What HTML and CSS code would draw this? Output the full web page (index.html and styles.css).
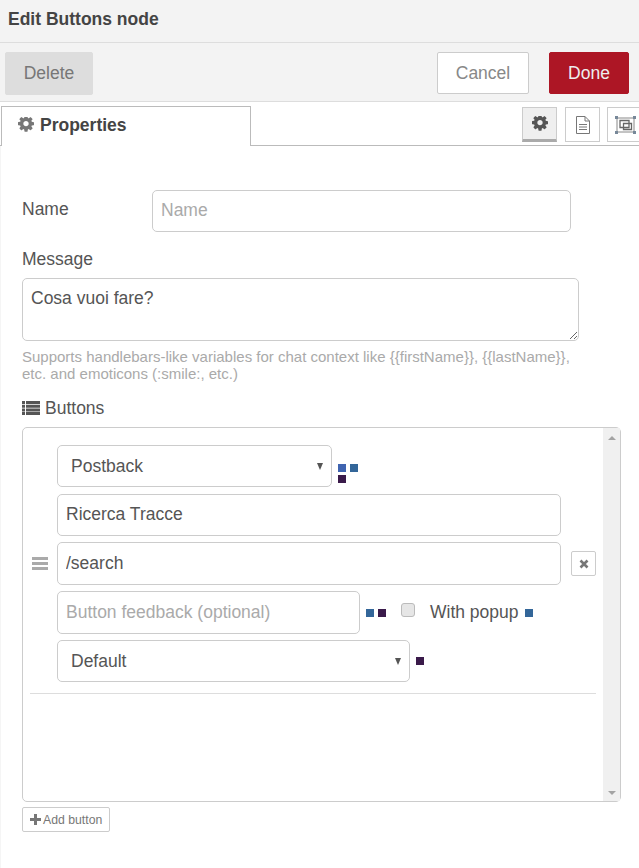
FILE: index.html
```html
<!DOCTYPE html>
<html lang="en">
<head>
    <meta charset="UTF-8">
    <meta name="viewport" content="width=device-width, initial-scale=1.0">
    <title>Edit Buttons node</title>
    <link rel="stylesheet" href="styles.css">
</head>
<body>
    <svg class="defs" width="0" height="0">
        <symbol id="cog" viewBox="0 0 1536 1536">
            <path fill="currentColor" d="M1024 640q0-106-75-181t-181-75-181 75-75 181 75 181 181 75 181-75 75-181zm512-109v222q0 12-8 23t-20 13l-185 28q-19 54-39 91 35 50 107 138 10 12 10 25t-9 23q-27 37-99 108t-94 71q-12 0-26-9l-138-108q-44 23-91 38-16 136-29 186-7 28-36 28h-222q-14 0-24.5-8.5t-11.5-21.5l-28-184q-49-16-90-37l-141 107q-10 9-25 9-14 0-25-11-126-114-165-168-7-10-7-23 0-12 8-23 15-21 51-66.5t54-70.5q-27-50-41-99l-183-27q-13-2-21-12.5t-8-23.5v-222q0-12 8-23t19-13l186-28q14-46 39-92-40-57-107-138-10-12-10-24 0-10 9-23 26-36 98.5-107.5t94.5-71.5q13 0 26 10l138 107q44-23 91-38 16-136 29-186 7-28 36-28h222q14 0 24.5 8.5t11.5 21.5l28 184q49 16 90 37l142-107q9-9 24-9 13 0 25 10 129 119 165 170 7 8 7 22 0 12-8 23-15 21-51 66.5t-54 70.5q26 50 41 98l183 28q13 2 21 12.5t8 23.5z"/>
        </symbol>
    </svg>

    <div id="title">Edit Buttons node</div>

    <div id="toolbar">
        <button class="btn btn-delete">Delete</button>
        <div class="spacer"></div>
        <button class="btn btn-cancel">Cancel</button>
        <button class="btn btn-done">Done</button>
    </div>

    <div id="tabs">
        <div class="tab">
            <svg class="tab-icon"><use href="#cog"/></svg>
            <span>Properties</span>
        </div>
        <div class="spacer"></div>
        <div class="tab-btn tab-btn-active">
            <svg class="tool-cog"><use href="#cog"/></svg>
        </div>
        <div class="tab-btn">
            <svg width="16" height="18" viewBox="0 0 16 18" fill="none" stroke="#777">
                <path d="M1.5 .5h8.5l4.5 4.5v12.5h-13z"/>
                <path d="M10 .5v4.5h4.5M4 8.5h8M4 11h8M4 13.5h8"/>
            </svg>
        </div>
        <div class="tab-btn tab-btn-last">
            <svg width="21" height="18" viewBox="0 0 21 18" fill="none" stroke="#666">
                <path d="M2 2h17v14h-17z" stroke="#888"/>
                <path d="M5 4.500h9v7h-9zM8.500 7.500h8v6h-8z" stroke-width="1.300"/>
                <path fill="#789" stroke="none" d="M0 0h3v3h-3zM18 0h3v3h-3zM0 15h3v3h-3zM18 15h3v3h-3z"/>
            </svg>
        </div>
    </div>

    <div id="form">
        <div class="form-row">
            <label class="name-label">Name</label>
            <input type="text" class="field name-input" placeholder="Name">
        </div>

        <label class="msg-label">Message</label>
        <textarea class="field message">Cosa vuoi fare?</textarea>
        <p class="tip">Supports handlebars-like variables for chat context like {{firstName}}, {{lastName}}, etc. and emoticons (:smile:, etc.)</p>

        <label class="buttons-label">
            <svg width="18" height="14" viewBox="0 0 18 14" fill="#555">
                <path d="M0 0h3v3h-3zM4 0h14v3h-14zM0 3.700h3v3h-3zM4 3.700h14v3h-14zM0 7.400h3v3h-3zM4 7.400h14v3h-14zM0 11h3v3h-3zM4 11h14v3h-14z"/>
            </svg>
            Buttons
        </label>

        <div id="list">
            <div id="list-scroll">
                <div class="item">
                    <div class="handle"><span></span><span></span><span></span></div>
                    <div class="fields">
                        <div class="line">
                            <div class="select-box sel-type">
                                <select class="field"><option>Postback</option></select>
                            </div>
                            <div class="dots dots-wrap">
                                <i class="dot dot-blue"></i><i class="dot dot-steel"></i><i class="dot dot-dark"></i>
                            </div>
                        </div>
                        <input type="text" class="field wide" value="Ricerca Tracce">
                        <input type="text" class="field wide tall" value="/search">
                        <div class="line">
                            <input type="text" class="field feedback tall" placeholder="Button feedback (optional)">
                            <div class="dots">
                                <i class="dot dot-steel"></i><i class="dot dot-dark"></i>
                            </div>
                            <input type="checkbox" class="check">
                            <span class="popup">With popup</span>
                            <i class="dot dot-steel"></i>
                        </div>
                        <div class="line">
                            <div class="select-box sel-style">
                                <select class="field"><option>Default</option></select>
                            </div>
                            <i class="dot dot-dark"></i>
                        </div>
                    </div>
                    <button class="remove">
                        <svg width="10" height="10" viewBox="0 0 10 10" stroke="#777" stroke-width="2.600"><path d="M1.500 1.500l7 7M8.500 1.500l-7 7"/></svg>
                    </button>
                </div>
            </div>
            <div id="scrollbar">
                <span class="arrow-up"></span>
                <span class="arrow-down"></span>
            </div>
        </div>

        <button class="add">
            <svg width="11" height="11" viewBox="0 0 11 11" fill="#777"><path d="M4 0h3v4h4v3h-4v4h-3v-4h-4v-3h4z"/></svg>
            Add button
        </button>
    </div>
</body>
</html>
```

FILE: styles.css
```css
* {
    box-sizing: border-box;
}
body {
    margin: 0;
    padding: 0;
    height: 868px;
    overflow: hidden;
    background-color: #fff;
    color: #555;
    font-family: "Liberation Sans", Arial, sans-serif;
    font-size: 17.5px;
}
.defs {
    display: block;
}
.spacer {
    flex-grow: 1;
}

#title {
    height: 43px;
    padding: 9px 8px 0;
    background-color: #f3f3f3;
    border-bottom: 1px solid #ddd;
    color: #444;
    font-weight: bold;
}

#toolbar {
    display: flex;
    height: 59px;
    padding: 9px 10px 0 5px;
    background-color: #f3f3f3;
    border-bottom: 1px solid #ddd;
}
.btn {
    height: 42px;
    border: 1px solid #ccc;
    border-radius: 2px;
    background: #fff;
    font-family: inherit;
    font-size: 17.5px;
    color: #888;
}
.btn-delete {
    width: 88px;
    height: 43px;
    background-color: #ddd;
    border-color: #ddd;
    color: #777;
}
.btn-cancel {
    width: 92px;
    margin-right: 20px;
}
.btn-done {
    width: 80px;
    background-color: #ad1625;
    border-color: #ad1625;
    color: #eee;
}

#tabs {
    display: flex;
    height: 40px;
    margin-top: 4px;
    padding-left: 1px;
    border-bottom: 1px solid #bbb;
}
.tab {
    display: flex;
    align-items: center;
    gap: 6px;
    width: 250px;
    height: 40px;
    padding: 0 0 3px 16px;
    background-color: #fff;
    border: 1px solid #bbb;
    border-bottom: none;
    font-weight: bold;
    color: #444;
}
.tab-icon {
    width: 16px;
    height: 16px;
    color: #777;
}
.tab-btn {
    display: flex;
    align-items: center;
    justify-content: center;
    width: 35px;
    height: 35px;
    margin: 1px 0 0 8px;
    border: 1px solid #ccc;
    background-color: #fff;
}
.tab-btn-active {
    background-color: #efefef;
    border-bottom: 3px solid #aaa;
    color: #555;
}
.tab-btn-last {
    width: 32px;
    margin-left: 7px;
    border-right: none;
    justify-content: flex-start;
    padding-left: 7px;
}
.tool-cog {
    width: 16px;
    height: 16px;
}

#form {
    padding: 44px 0 0 21px;
    height: 723px;
    border-left: 1px solid #f5f5f5;
}
.form-row {
    display: flex;
    align-items: center;
}
label {
    display: block;
}
.name-label {
    width: 130px;
    padding-bottom: 4px;
}
.field {
    display: block;
    width: 100%;
    height: 42px;
    padding: 0 8px 1px;
    border: 1px solid #ccc;
    border-radius: 5px;
    background-color: #fff;
    color: #555;
    font-family: inherit;
    font-size: 17.5px;
}
.field::placeholder {
    color: #aaa;
}
.name-input {
    width: 419px;
}
.msg-label {
    margin-top: 17px;
    height: 29px;
}
.message {
    width: 557px;
    height: 63px;
    padding: 9px 8px;
}
.tip {
    width: 570px;
    margin: 7px 0 0;
    font-size: 15px;
    line-height: 17px;
    color: #aaa;
}
.buttons-label {
    display: flex;
    align-items: center;
    gap: 5px;
    margin-top: 16px;
    height: 20px;
}

#list {
    display: flex;
    width: 599px;
    height: 375px;
    margin-top: 9px;
    border: 1px solid #ccc;
    border-radius: 5px;
}
#list-scroll {
    flex-grow: 1;
    padding: 17px 7px 0;
}
#scrollbar {
    display: flex;
    flex-direction: column;
    justify-content: space-between;
    align-items: center;
    width: 17px;
    padding: 8px 0 6px;
    background-color: #f0f0f0;
}
.arrow-up {
    border: 4px solid transparent;
    border-top: none;
    border-bottom: 4px solid #a3a3a3;
}
.arrow-down {
    border: 4px solid transparent;
    border-bottom: none;
    border-top: 4px solid #a3a3a3;
}

.item {
    display: flex;
    align-items: center;
    padding-bottom: 11px;
    border-bottom: 1px solid #ddd;
}
.handle {
    display: flex;
    flex-direction: column;
    gap: 2px;
    width: 16px;
    margin: 0 9px 0 2px;
}
.handle span {
    height: 3px;
    background-color: #aaa;
}
.fields {
    width: 504px;
}
.line {
    display: flex;
    align-items: center;
}
.select-box {
    position: relative;
}
.select-box::after {
    content: "";
    position: absolute;
    top: 18px;
    right: 9px;
    border: 3.5px solid transparent;
    border-bottom: none;
    border-top: 7px solid #555;
}
.sel-type {
    width: 275px;
}
.sel-style {
    width: 353px;
}
select.field {
    padding: 0 8px 0 13px;
    appearance: none;
}
.wide {
    width: 504px;
    margin-top: 7px;
}
.tall {
    height: 43px;
}
.wide.tall {
    margin-top: 6px;
}
.line:nth-child(4),
.line:nth-child(5) {
    margin-top: 6px;
}
.feedback {
    width: 303px;
}
.dots {
    display: flex;
    flex-wrap: wrap;
    gap: 3px 4px;
    margin-left: 6px;
}
.dots-wrap {
    width: 20px;
    margin-top: 14px;
}
.dot {
    display: block;
    flex-shrink: 0;
    width: 8px;
    height: 8px;
}
.dot-blue {
    background-color: #3f64b0;
}
.dot-steel {
    background-color: #336699;
}
.dot-dark {
    background-color: #3a1a4a;
}
.line > .dot {
    margin-left: 6px;
}
.check {
    appearance: none;
    width: 14px;
    height: 14px;
    margin: -6px 0 0 15px;
    border: 1px solid #bbb;
    border-radius: 3px;
    background-color: #e6e6e6;
}
.popup {
    margin-left: 15px;
    white-space: nowrap;
}
.remove {
    display: flex;
    align-items: center;
    justify-content: center;
    width: 25px;
    height: 25px;
    margin-left: 10px;
    padding: 0;
    border: 1px solid #ccc;
    border-radius: 2px;
    background-color: #fff;
}

.add {
    display: flex;
    align-items: center;
    gap: 2px;
    width: 88px;
    height: 25px;
    margin-top: 5px;
    padding: 0 0 0 7px;
    border: 1px solid #ccc;
    border-radius: 2px;
    background-color: #fff;
    color: #777;
    font-family: inherit;
    font-size: 12.25px;
    white-space: nowrap;
}
```
